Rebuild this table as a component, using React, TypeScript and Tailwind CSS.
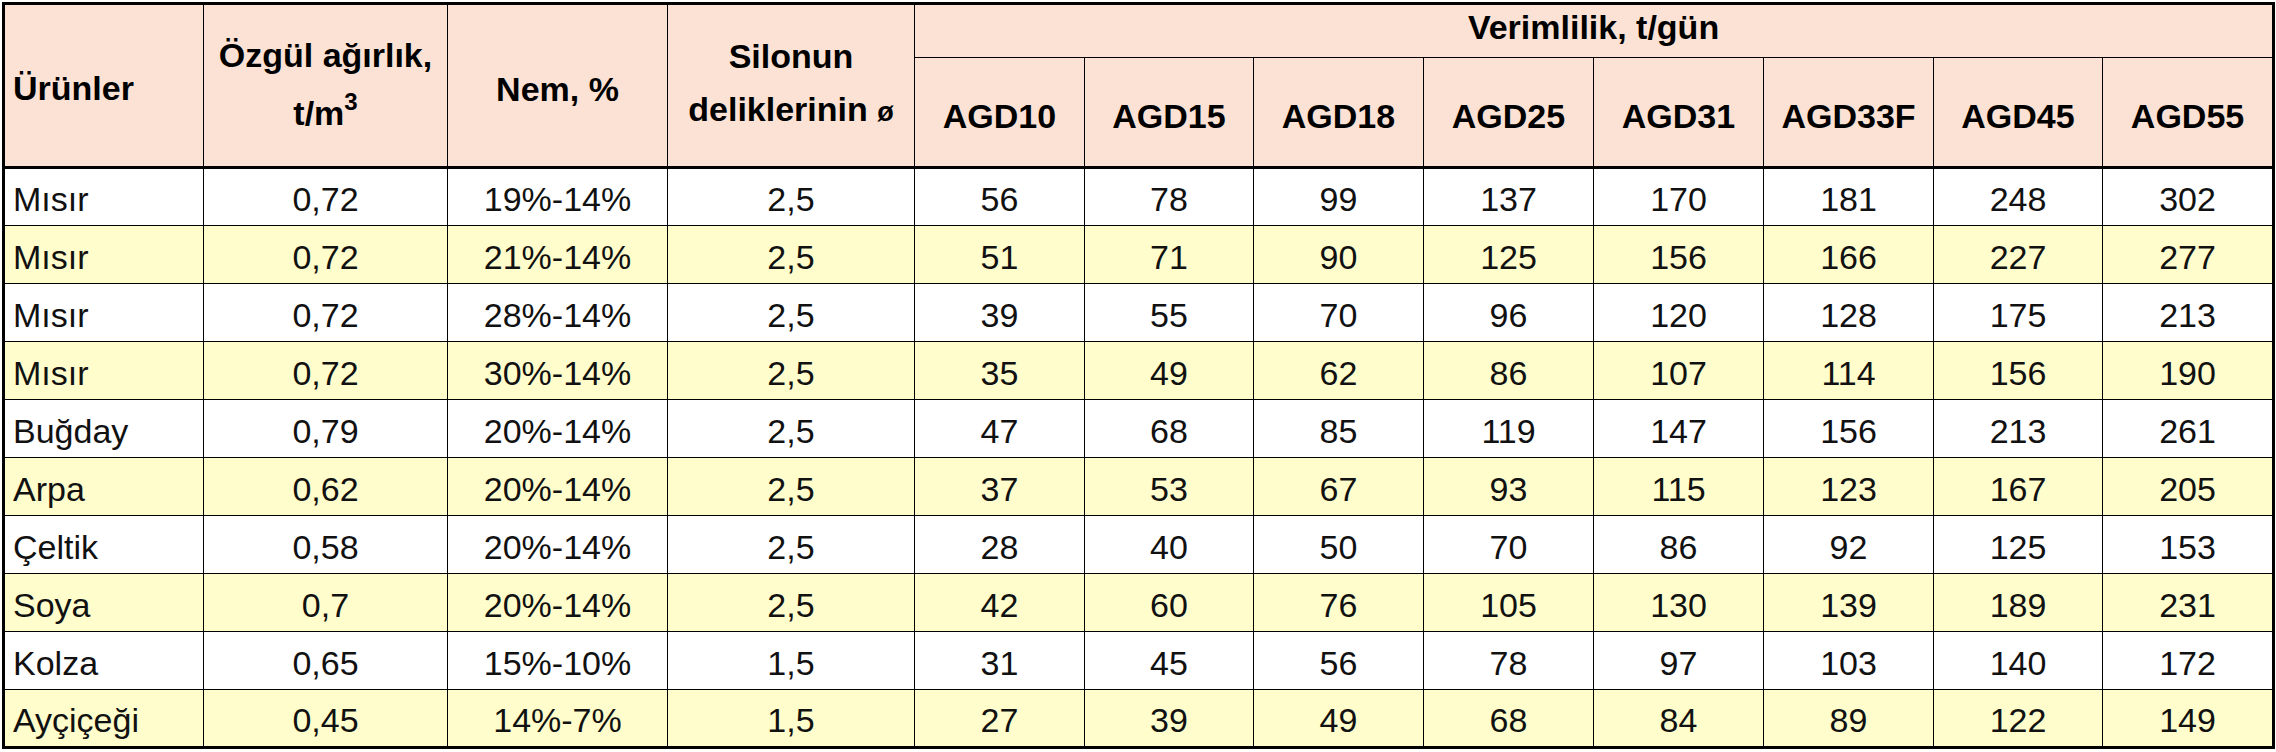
import React from "react";

type Row = {
  name: string;
  weight: string;
  moisture: string;
  hole: string;
  values: number[];
};

const models = ["AGD10", "AGD15", "AGD18", "AGD25", "AGD31", "AGD33F", "AGD45", "AGD55"];

const rows: Row[] = [
  { name: "Mısır", weight: "0,72", moisture: "19%-14%", hole: "2,5", values: [56, 78, 99, 137, 170, 181, 248, 302] },
  { name: "Mısır", weight: "0,72", moisture: "21%-14%", hole: "2,5", values: [51, 71, 90, 125, 156, 166, 227, 277] },
  { name: "Mısır", weight: "0,72", moisture: "28%-14%", hole: "2,5", values: [39, 55, 70, 96, 120, 128, 175, 213] },
  { name: "Mısır", weight: "0,72", moisture: "30%-14%", hole: "2,5", values: [35, 49, 62, 86, 107, 114, 156, 190] },
  { name: "Buğday", weight: "0,79", moisture: "20%-14%", hole: "2,5", values: [47, 68, 85, 119, 147, 156, 213, 261] },
  { name: "Arpa", weight: "0,62", moisture: "20%-14%", hole: "2,5", values: [37, 53, 67, 93, 115, 123, 167, 205] },
  { name: "Çeltik", weight: "0,58", moisture: "20%-14%", hole: "2,5", values: [28, 40, 50, 70, 86, 92, 125, 153] },
  { name: "Soya", weight: "0,7", moisture: "20%-14%", hole: "2,5", values: [42, 60, 76, 105, 130, 139, 189, 231] },
  { name: "Kolza", weight: "0,65", moisture: "15%-10%", hole: "1,5", values: [31, 45, 56, 78, 97, 103, 140, 172] },
  { name: "Ayçiçeği", weight: "0,45", moisture: "14%-7%", hole: "1,5", values: [27, 39, 49, 68, 84, 89, 122, 149] },
];

// column widths measured off the sheet
const colClasses = [
  "w-[200px]",
  "w-[244px]",
  "w-[220px]",
  "w-[247px]",
  "w-[170px]",
  "w-[169px]",
  "w-[170px]",
  "w-[170px]",
  "w-[170px]",
  "w-[170px]",
  "w-[169px]",
  "w-[171px]",
];

const th = "border border-black bg-[#fbe2d5] font-bold text-[34px] text-black";
const td = "border border-black text-[34px] text-[#111] pt-[4px] leading-[38px]";

const App = () => {
  return (
    <div className="w-[2276px] h-[752px] bg-white pt-[2px] pl-[2px] font-['Liberation_Sans',Arial,sans-serif]">
      <table className="table-fixed border-collapse border-[3px] border-black w-[2271px]">
        <colgroup>
          {colClasses.map((c, i) => (
            <col key={i} className={c} />
          ))}
        </colgroup>
        <thead>
          <tr className="h-[54px]">
            <th rowSpan={2} className={`${th} text-left pl-[8px] pt-[4px] leading-[40px]`}>
              Ürünler
            </th>
            <th rowSpan={2} className={`${th} text-center leading-[58px] pb-[4px]`}>
              Özgül ağırlık,
              <br />
              t/m<sup className="text-[24px] relative -top-[15px]">3</sup>
            </th>
            <th rowSpan={2} className={`${th} text-center pt-[6px] leading-[40px]`}>
              Nem, %
            </th>
            <th rowSpan={2} className={`${th} text-center leading-[53px] pb-[2px]`}>
              Silonun
              <br />
              deliklerinin <span className="text-[27px]">ø</span>
            </th>
            <th colSpan={8} className={`${th} text-center pb-[8px] leading-[40px] border-b`}>
              Verimlilik, t/gün
            </th>
          </tr>
          <tr className="h-[110px] border-b-[3px] border-black">
            {models.map((m) => (
              <th key={m} className={`${th} text-center pt-[8px] leading-[40px] border-b-[3px]`}>
                {m}
              </th>
            ))}
          </tr>
        </thead>
        <tbody>
          {rows.map((r, i) => (
            <tr
              key={i}
              className={`h-[58px] ${i === 0 ? "border-t-[3px] border-black" : ""} ${
                i % 2 === 1 ? "bg-[#fffdcb]" : "bg-white"
              }`}
            >
              <td className={`${td} text-left pl-[8px]`}>{r.name}</td>
              <td className={`${td} text-center`}>{r.weight}</td>
              <td className={`${td} text-center`}>{r.moisture}</td>
              <td className={`${td} text-center`}>{r.hole}</td>
              {r.values.map((v, j) => (
                <td key={j} className={`${td} text-center`}>
                  {v}
                </td>
              ))}
            </tr>
          ))}
        </tbody>
      </table>
    </div>
  );
};

export default App;
